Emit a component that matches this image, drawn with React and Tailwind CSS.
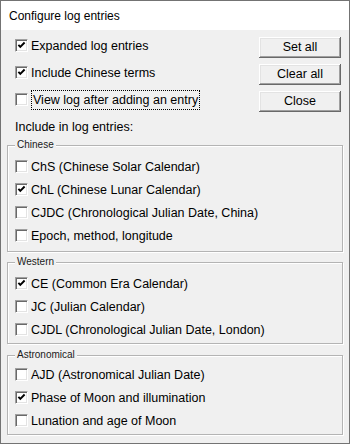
import React from "react";

function Check({ checked }) {
  return (
    <span className="relative block w-[13px] h-[13px] shrink-0 bg-white border border-t-[#a0a0a0] border-l-[#a0a0a0] border-b-white border-r-white shadow-[inset_1px_1px_0_#696969,inset_-1px_-1px_0_#e3e3e3]">
      {checked && (
        <svg
          className="absolute left-0 top-0"
          width="11"
          height="11"
          viewBox="0 0 11 11"
        >
          <polyline
            points="2.4,4.8 4.3,6.8 8.6,2.5"
            fill="none"
            stroke="#000"
            strokeWidth="1.9"
          />
        </svg>
      )}
    </span>
  );
}

function Row({ checked, label, h = "h-[23px]" }) {
  return (
    <div className={`flex items-center ${h}`}>
      <Check checked={checked} />
      <span className="ml-[3px] leading-[16px] whitespace-nowrap">{label}</span>
    </div>
  );
}

function Btn({ children, className = "" }) {
  return (
    <div
      className={`w-[82px] h-[21px] flex items-center justify-center bg-[#f0f0f0] shadow-[inset_-1px_-1px_0_#696969,inset_1px_1px_0_#ffffff,inset_-2px_-2px_0_#a0a0a0,inset_2px_2px_0_#e3e3e3] ${className}`}
    >
      {children}
    </div>
  );
}

function Group({ label, className = "", children }) {
  return (
    <div
      className={`relative border border-[#b4b4b4] shadow-[inset_1px_1px_0_#ffffff,1px_1px_0_#ffffff] pl-[7px] ${className}`}
    >
      <span className="absolute left-[7px] -top-[7px] h-[12px] leading-[12px] px-[2px] bg-[#f0f0f0] text-[10px] text-[#1a1a1a]">
        {label}
      </span>
      {children}
    </div>
  );
}

export default function App() {
  return (
    <div className="w-[350px] h-[444px] border border-[#737373] bg-[#f0f0f0] font-['Liberation_Sans',Arial,sans-serif] text-[12.5px] text-black overflow-hidden">
      <div className="h-[29px] bg-white flex items-center pl-[8px] text-[12px] text-black">
        Configure log entries
      </div>
      <div className="px-[6px]">
        <div className="flex justify-between pl-[8px] pr-[2px]">
          <div className="flex flex-col pt-[5px]">
            <Row checked label="Expanded log entries" h="h-[21px]" />
            <div className="mt-[6px]">
              <Row checked label="Include Chinese terms" h="h-[21px]" />
            </div>
            <div className="mt-[6px] flex items-center h-[21px]">
              <Check checked={false} />
              <span className="ml-[3px] h-[20px] flex items-center pl-[1px] pr-[1px] border border-dotted border-black leading-[16px] whitespace-nowrap">
                View log after adding an entry
              </span>
            </div>
          </div>
          <div className="flex flex-col pt-[7px]">
            <Btn>Set all</Btn>
            <Btn className="mt-[6px]">Clear all</Btn>
            <Btn className="mt-[6px]">Close</Btn>
          </div>
        </div>
        <div className="mt-[7px] h-[16px] flex items-center pl-[8px]">
          Include in log entries:
        </div>
        <Group label="Chinese" className="mt-[10px] pt-[9px] pb-[4px]">
          <Row label="ChS (Chinese Solar Calendar)" />
          <Row checked label="ChL (Chinese Lunar Calendar)" />
          <Row label="CJDC (Chronological Julian Date, China)" />
          <Row label="Epoch, method, longitude" />
        </Group>
        <Group label="Western" className="mt-[10px] pt-[9px] pb-[2px]">
          <Row checked label="CE (Common Era Calendar)" />
          <Row label="JC (Julian Calendar)" />
          <Row label="CJDL (Chronological Julian Date, London)" />
        </Group>
        <Group label="Astronomical" className="mt-[11px] pt-[7px] pb-[2px]">
          <Row label="AJD (Astronomical Julian Date)" />
          <Row checked label="Phase of Moon and illumination" />
          <Row label="Lunation and age of Moon" />
        </Group>
      </div>
    </div>
  );
}
